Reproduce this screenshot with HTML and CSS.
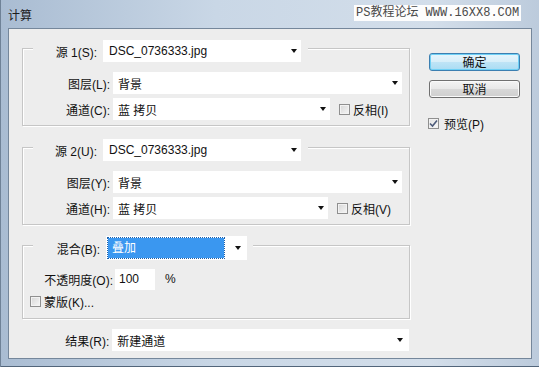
FILE: index.html
```html
<!DOCTYPE html>
<html lang="zh-CN">
<head>
    <meta charset="UTF-8">
    <title>计算</title>
    <link rel="stylesheet" href="styles.css">
</head>
<body>
    <div class="window">
        <div class="titlebar">
            <span class="title">计算</span>
            <span class="mark">PS教程论坛 WWW.16XX8.COM</span>
        </div>
        <div class="client">
            <div class="main">
                <!-- 源 1 -->
                <div class="group">
                    <div class="head">
                        <span class="lbl lbl-src">源 1(S):</span>
                        <div class="select w-src"><span>DSC_0736333.jpg</span><i class="arrow"></i></div>
                    </div>
                    <div class="row first">
                        <span class="lbl lbl-row">图层(L):</span>
                        <div class="select w-long"><span>背景</span><i class="arrow"></i></div>
                    </div>
                    <div class="row">
                        <span class="lbl lbl-row">通道(C):</span>
                        <div class="select w-mid"><span>蓝 拷贝</span><i class="arrow"></i></div>
                        <label class="check inv"><span class="box"></span>反相(I)</label>
                    </div>
                </div>

                <!-- 源 2 -->
                <div class="group g2">
                    <div class="head">
                        <span class="lbl lbl-src">源 2(U):</span>
                        <div class="select w-src"><span>DSC_0736333.jpg</span><i class="arrow"></i></div>
                    </div>
                    <div class="row first">
                        <span class="lbl lbl-row">图层(Y):</span>
                        <div class="select w-long"><span>背景</span><i class="arrow"></i></div>
                    </div>
                    <div class="row">
                        <span class="lbl lbl-row">通道(H):</span>
                        <div class="select w-mid2"><span>蓝 拷贝</span><i class="arrow"></i></div>
                        <label class="check inv"><span class="box"></span>反相(V)</label>
                    </div>
                </div>

                <!-- 混合 -->
                <div class="group g3">
                    <div class="head head-blend">
                        <span class="lbl lbl-blend">混合(B):</span>
                        <div class="select blend"><span class="hl">叠加</span><i class="arrow"></i></div>
                    </div>
                    <div class="row opacity">
                        <span class="lbl lbl-op">不透明度(O):</span>
                        <div class="input">100</div>
                        <span class="pct">%</span>
                    </div>
                    <div class="row mask">
                        <label class="check"><span class="box"></span>蒙版(K)...</label>
                    </div>
                </div>

                <div class="row result">
                    <span class="lbl lbl-res">结果(R):</span>
                    <div class="select w-res"><span>新建通道</span><i class="arrow"></i></div>
                </div>
            </div>

            <div class="side">
                <button type="button" class="btn default">确定</button>
                <button type="button" class="btn">取消</button>
                <label class="check preview">
                    <span class="box">
                        <svg width="9" height="9" viewBox="0 0 9 9"><path d="M1 4.5 L3.5 7 L8 1.5" fill="none" stroke="#4d5b7a" stroke-width="1.6"/></svg>
                    </span>预览(P)
                </label>
            </div>
        </div>
    </div>
</body>
</html>
```

FILE: styles.css
```css
body {
    margin: 0;
    font-family: "Liberation Sans", "Noto Sans CJK SC", sans-serif;
    font-size: 12px;
    color: #111;
    background: #d6e0eb;
}

/* ventana */
.window {
    width: 539px;
    height: 367px;
    box-sizing: border-box;
    padding: 0 7px 8px 8px;
    background: linear-gradient(to right, #a9bcd2, #c9d7e6 40%, #d3deea 80%, #bccbdc);
    box-shadow: inset 1px 0 #6f8297, inset 0 -1px #52657a;
    display: flex;
    flex-direction: column;
}

.titlebar {
    height: 28px;
    position: relative;
    display: flex;
    align-items: center;
}

.title {
    font-family: "Noto Sans CJK SC", sans-serif;
    font-size: 12px;
    color: #1b1b1b;
    margin-top: 1px;
}

.mark {
    position: absolute;
    left: 346px;
    top: 5px;
    padding: 0 2px;
    height: 16px;
    line-height: 16px;
    background: #fdfdfd;
    color: #4a4a4a;
    font-family: "Liberation Mono", "Noto Sans CJK SC", monospace;
    font-size: 12px;
}

.client {
    flex: 1;
    background: #ededed;
    border: 1px solid #75879b;
    display: flex;
}

.main {
    width: 400px;
    box-sizing: border-box;
    padding: 19px 0 0 13px;
}

/* grupos */
.group {
    width: 388px;
    box-sizing: border-box;
    border: 1px solid #c6c6c6;
    box-shadow: inset 1px 1px 0 #fff, 1px 1px 0 #fff;
    padding-bottom: 5px;
}

.g2 {
    margin-top: 21px;
}

.g3 {
    margin-top: 20px;
    padding-bottom: 9px;
}

.head {
    display: flex;
    align-items: center;
    height: 22px;
    width: 275px;
    margin: -9px 0 0 10px;
    background: #ededed;
}

.head-blend {
    height: 24px;
    width: 220px;
    margin-top: -10px;
}

.row {
    display: flex;
    align-items: center;
    height: 22px;
    margin-top: 4px;
}

.row.first {
    margin-top: 10px;
}

.lbl {
    text-align: right;
    white-space: nowrap;
}

.lbl-src {
    width: 64px;
    margin-right: 6px;
}

.lbl-row {
    width: 87px;
    margin-right: 3px;
}

.lbl-blend {
    width: 67px;
    margin-right: 6px;
}

.lbl-op {
    width: 90px;
    margin-right: 2px;
}

.lbl-res {
    width: 88px;
    margin-right: 3px;
}

/* listas desplegables */
.select {
    height: 22px;
    box-sizing: border-box;
    background: #fff;
    display: flex;
    align-items: center;
    padding: 0 4px 0 5px;
}

.select .arrow {
    margin-left: auto;
    width: 0;
    height: 0;
    border-top: 4px solid #111;
    border-left: 3px solid transparent;
    border-right: 3px solid transparent;
}

.w-src { width: 198px; padding-left: 6px; }
.w-long { width: 289px; }
.w-mid { width: 217px; }
.w-mid2 { width: 215px; }
.w-res { width: 299px; padding-right: 6px; }

.blend {
    width: 141px;
    height: 24px;
    padding: 0 6px 0 2px;
}

.blend .hl {
    width: 112px;
    height: 20px;
    line-height: 20px;
    padding-left: 4px;
    background: #3a97f0;
    color: #fff;
    outline: 1px dotted #1d5fa8;
}

.opacity {
    margin-top: 8px;
}

.input {
    width: 40px;
    height: 21px;
    line-height: 21px;
    box-sizing: border-box;
    padding-left: 4px;
    background: #fff;
}

.pct {
    margin-left: 10px;
}

.mask {
    height: 16px;
    margin-top: 3px;
    padding-left: 7px;
}

.result {
    margin-top: 10px;
    height: 22px;
}

/* casillas */
.check {
    display: flex;
    align-items: center;
    white-space: nowrap;
}

.check.inv {
    margin-left: 9px;
}

.box {
    width: 11px;
    height: 11px;
    box-sizing: border-box;
    border: 1px solid #8f8f8f;
    background: linear-gradient(135deg, #d6d6d6, #f6f6f6);
    box-shadow: inset 0 0 0 1px #f2f2f2;
    margin-right: 3px;
    display: flex;
    align-items: center;
    justify-content: center;
}

/* columna derecha */
.side {
    padding: 24px 0 0 19px;
    display: flex;
    flex-direction: column;
    align-items: flex-start;
}

.btn {
    width: 91px;
    height: 18px;
    padding: 0;
    font-family: "Noto Sans CJK SC", sans-serif;
    font-size: 12px;
    line-height: 14px;
    color: #111;
    border: 1px solid #707070;
    border-radius: 3px;
    background: linear-gradient(#f4f4f4, #e8e8e8 50%, #d8d8d8 51%, #cfcfcf);
    box-shadow: inset 0 0 0 1px #fafafa;
    margin-left: 1px;
}

.btn + .btn {
    margin-top: 9px;
}

.btn.default {
    border-color: #3c7fb1;
    background: linear-gradient(#e6f5fc, #d7eef9 50%, #bfe4f6 51%, #aadcf3);
    box-shadow: inset 0 0 0 1px #6fd0f5;
}

.preview {
    margin-top: 17px;
}

.preview .box {
    margin-right: 5px;
    background: linear-gradient(135deg, #e2e2e2, #fafafa);
}
```
